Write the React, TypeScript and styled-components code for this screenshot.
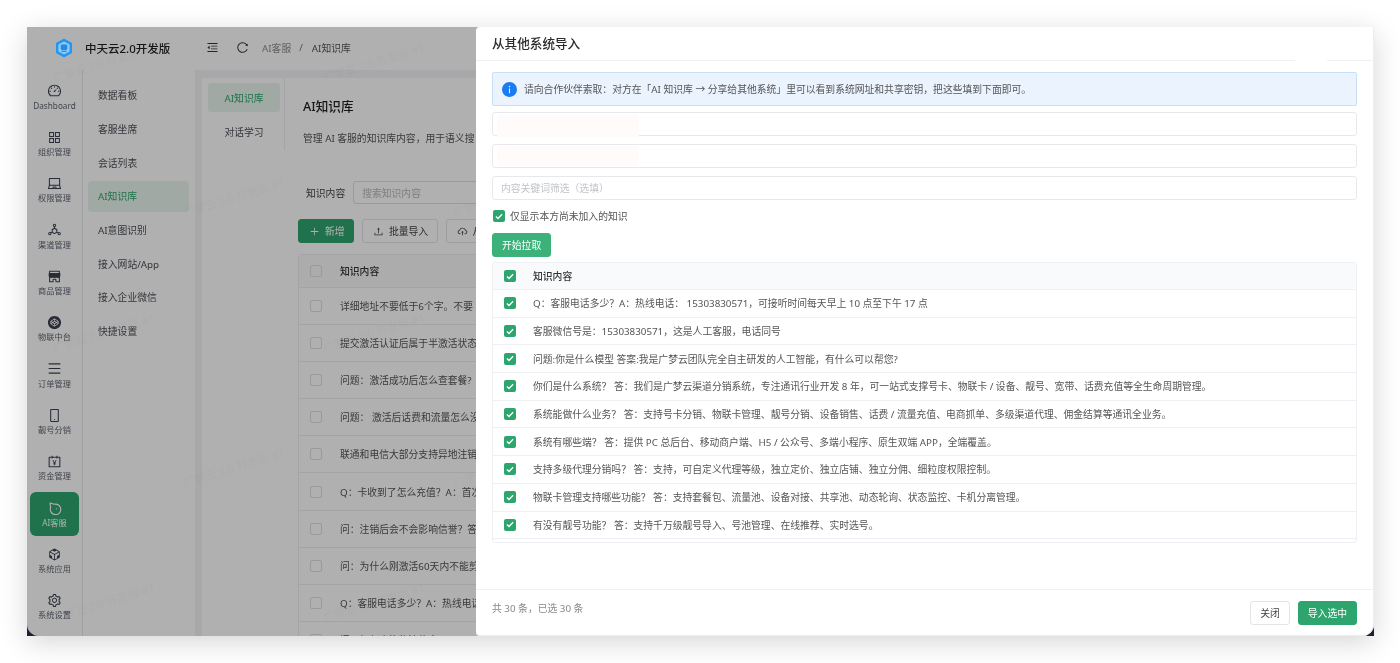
import type { ReactNode } from "react";
import styled, { createGlobalStyle } from "styled-components";
import {
  AiFillInfoCircle,
  AiFillShop,
  AiOutlineAccountBook,
  AiOutlineAppstore,
  AiOutlineCloudUpload,
  AiOutlineCodeSandbox,
  AiOutlineCodepenCircle,
  AiOutlineDashboard,
  AiOutlineDeploymentUnit,
  AiOutlineLaptop,
  AiOutlineMenu,
  AiOutlineMenuFold,
  AiOutlineMobile,
  AiOutlinePlus,
  AiOutlineReload,
  AiOutlineSetting,
  AiOutlineUpload,
} from "react-icons/ai";

const GREEN = "#2ea56e";

const GlobalStyle = createGlobalStyle`
  html, body {
    margin: 0;
    background: #fff;
    overflow: hidden;
    font-family: "Noto Sans", "Noto Sans CJK SC", sans-serif;
  }
  * { box-sizing: border-box; }
`;

const BotIcon = () => (
  <svg width="14" height="14" viewBox="0 0 24 24" fill="none" stroke="currentColor" strokeWidth="1.9">
    <path d="M3.5 3.5 L11 5.6 A9 9 0 1 1 4.4 11.5 Z" strokeLinejoin="round" />
    <circle cx="14.5" cy="13.5" r="1" fill="currentColor" stroke="none" />
  </svg>
);

const Logo = () => (
  <svg width="18" height="20" viewBox="0 0 18 20">
    <path d="M9 0.5 L17 5 V15 L9 19.5 L1 15 V5 Z" fill="#2196f3" />
    <path d="M9 3.4 L14.6 6.6 V13.4 L9 16.6 L3.4 13.4 V6.6 Z" fill="#8ccdf7" />
    <rect x="5.8" y="6.4" width="6.4" height="5.6" rx="1" fill="#2a86e0" />
    <path d="M6.5 13.4 H11.5" stroke="#2a86e0" strokeWidth="1.3" />
  </svg>
);

const Check = () => (
  <svg width="8" height="7" viewBox="0 0 8 7" fill="none">
    <path d="M0.9 3.6 L3 5.5 L7.1 1.2" stroke="#fff" strokeWidth="1.3" />
  </svg>
);

const railItems: { label: string; icon: ReactNode; active?: boolean }[] = [
  { label: "Dashboard", icon: <AiOutlineDashboard /> },
  { label: "组织管理", icon: <AiOutlineAppstore /> },
  { label: "权限管理", icon: <AiOutlineLaptop /> },
  { label: "渠道管理", icon: <AiOutlineDeploymentUnit /> },
  { label: "商品管理", icon: <AiFillShop /> },
  { label: "物联中台", icon: <AiOutlineCodepenCircle /> },
  { label: "订单管理", icon: <AiOutlineMenu /> },
  { label: "靓号分销", icon: <AiOutlineMobile /> },
  { label: "资金管理", icon: <AiOutlineAccountBook /> },
  { label: "AI客服", icon: <BotIcon />, active: true },
  { label: "系统应用", icon: <AiOutlineCodeSandbox /> },
  { label: "系统设置", icon: <AiOutlineSetting /> },
];

const subItems = ["数据看板", "客服坐席", "会话列表", "AI知识库", "AI意图识别", "接入网站/App", "接入企业微信", "快捷设置"];

// the drawer hides the rest of these lines, only the visible part is kept
const backRows = [
  "详细地址不要低于6个字。不要",
  "提交激活认证后属于半激活状态",
  "问题：激活成功后怎么查套餐?",
  "问题： 激活后话费和流量怎么没",
  "联通和电信大部分支持异地注销",
  "Q：卡收到了怎么充值？A：首次",
  "问：注销后会不会影响信誉？答",
  "问：为什么刚激活60天内不能剪",
  "Q：客服电话多少？A：热线电话",
  "问：如何查询物流信息",
];

const importRows = [
  "Q：客服电话多少？A：热线电话： 15303830571，可接听时间每天早上 10 点至下午 17 点",
  "客服微信号是：15303830571，这是人工客服，电话同号",
  "问题:你是什么模型 答案:我是广梦云团队完全自主研发的人工智能，有什么可以帮您?",
  "你们是什么系统？ 答：我们是广梦云渠道分销系统，专注通讯行业开发 8 年，可一站式支撑号卡、物联卡 / 设备、靓号、宽带、话费充值等全生命周期管理。",
  "系统能做什么业务？ 答：支持号卡分销、物联卡管理、靓号分销、设备销售、话费 / 流量充值、电商抓单、多级渠道代理、佣金结算等通讯全业务。",
  "系统有哪些端？ 答：提供 PC 总后台、移动商户端、H5 / 公众号、多端小程序、原生双端 APP，全端覆盖。",
  "支持多级代理分销吗？ 答：支持，可自定义代理等级，独立定价、独立店铺、独立分佣、细粒度权限控制。",
  "物联卡管理支持哪些功能？ 答：支持套餐包、流量池、设备对接、共享池、动态轮询、状态监控、卡机分离管理。",
  "有没有靓号功能？ 答：支持千万级靓号导入、号池管理、在线推荐、实时选号。",
];

const App = () => {
  return (
    <>
      <GlobalStyle />
      <Page>
        <Frame>
          <Shell>
            <Side>
              <Brand>
                <LogoWrap>
                  <Logo />
                </LogoWrap>
                <BrandName>中天云2.0开发版</BrandName>
              </Brand>
              <SideBody>
                <Rail>
                  {railItems.map((item) => (
                    <RailItem key={item.label} $active={item.active}>
                      <RailIcon $active={item.active}>{item.icon}</RailIcon>
                      <span>{item.label}</span>
                    </RailItem>
                  ))}
                </Rail>
                <SubMenu>
                  {subItems.map((item) => (
                    <SubItem key={item} $active={item === "AI知识库"}>
                      {item}
                    </SubItem>
                  ))}
                </SubMenu>
              </SideBody>
            </Side>
            <Right>
              <TopBar>
                <TopIcon>
                  <AiOutlineMenuFold />
                </TopIcon>
                <TopIcon>
                  <AiOutlineReload />
                </TopIcon>
                <Crumbs>
                  <span>AI客服</span>
                  <CrumbSep>/</CrumbSep>
                  <CrumbNow>AI知识库</CrumbNow>
                </Crumbs>
              </TopBar>
              <Content>
                <Panel>
                  <Tabs>
                    <TabItem $active>AI知识库</TabItem>
                    <TabItem>对话学习</TabItem>
                  </Tabs>
                  <Main>
                    <Heading>AI知识库</Heading>
                    <Desc>管理 AI 客服的知识库内容，用于语义搜</Desc>
                    <Filter>
                      <FilterLabel>知识内容</FilterLabel>
                      <FilterInput>搜索知识内容</FilterInput>
                    </Filter>
                    <Actions>
                      <Button $kind="primary" $icon>
                        <AiOutlinePlus />
                        新增
                      </Button>
                      <Button $icon>
                        <AiOutlineUpload />
                        批量导入
                      </Button>
                      <Button $icon>
                        <AiOutlineCloudUpload />从
                      </Button>
                    </Actions>
                    <BackTable>
                      <BackHead>
                        <BackBox />
                        知识内容
                      </BackHead>
                      {backRows.map((row) => (
                        <BackRow key={row}>
                          <BackBox />
                          {row}
                        </BackRow>
                      ))}
                    </BackTable>
                  </Main>
                </Panel>
              </Content>
            </Right>
          </Shell>
          <Mask>
            <WatermarkSvg>
              <defs>
                <pattern id="wm" width="270" height="270" patternUnits="userSpaceOnUse">
                  <text x="158" y="190" transform="rotate(-17 158 190)">广梦云 2.0 开发版 #1</text>
                  <text x="28" y="55" transform="rotate(-17 28 55)">广梦云 2.0 开发版 #1</text>
                </pattern>
              </defs>
              <rect width="100%" height="100%" fill="url(#wm)" />
            </WatermarkSvg>
          </Mask>
          <Drawer>
            <DrawerHead>
              从其他系统导入
              <LinePatch />
            </DrawerHead>
            <DrawerBody>
              <Notice>
                <NoticeIcon>
                  <AiFillInfoCircle />
                </NoticeIcon>
                请向合作伙伴索取：对方在「AI 知识库 → 分享给其他系统」里可以看到系统网址和共享密钥，把这些填到下面即可。
              </Notice>
              <Field>
                <Redaction $first />
              </Field>
              <Field>
                <Redaction />
              </Field>
              <Field>内容关键词筛选（选填）</Field>
              <CheckLine>
                <Box>
                  <Check />
                </Box>
                仅显示本方尚未加入的知识
              </CheckLine>
              <Button $kind="soft">开始拉取</Button>
              <ImportTable>
                <ImportHead>
                  <Box>
                    <Check />
                  </Box>
                  知识内容
                </ImportHead>
                {importRows.map((row) => (
                  <ImportRow key={row}>
                    <Box>
                      <Check />
                    </Box>
                    <RowText>{row}</RowText>
                  </ImportRow>
                ))}
              </ImportTable>
            </DrawerBody>
            <DrawerFoot>
              <Count>共 30 条，已选 30 条</Count>
              <FootButtons>
                <Button>关闭</Button>
                <Button $kind="primary">导入选中</Button>
              </FootButtons>
            </DrawerFoot>
          </Drawer>
        </Frame>
      </Page>
    </>
  );
};

const Page = styled.div`
  width: 1400px;
  height: 663px;
  padding: 27px 26px 27px 27px;
  filter: blur(0.3px);
`;

const Frame = styled.div`
  position: relative;
  height: 609px;
  background: #1b2130;
  box-shadow: 0 6px 26px rgba(0, 0, 0, 0.17);
`;

const Shell = styled.div`
  display: flex;
  height: 100%;
  background: #fff;
  border-radius: 0 0 12px 12px;
  overflow: hidden;
`;

const Side = styled.div`
  width: 168px;
  flex: none;
  display: flex;
  flex-direction: column;
`;

const Brand = styled.div`
  height: 43px;
  display: flex;
  align-items: center;
  padding: 0 0 2px 28px;
  gap: 12px;
`;

/* the logo keeps its full colour in the screenshot, so it sits above the mask */
const LogoWrap = styled.div`
  position: relative;
  z-index: 1;
  display: flex;
`;

const BrandName = styled.div`
  font-size: 11.5px;
  font-weight: 500;
  color: #222;
  white-space: nowrap;
`;

const SideBody = styled.div`
  flex: 1;
  display: flex;
  min-height: 0;
`;

const Rail = styled.div`
  width: 56px;
  flex: none;
  border-right: 1px solid #e6e8eb;
  padding: 5.3px 0 0 3px;
  display: flex;
  flex-direction: column;
  gap: 2.33px;
`;

const RailItem = styled.div<{ $active?: boolean }>`
  width: 49px;
  height: 44px;
  flex: none;
  border-radius: 6px;
  display: flex;
  flex-direction: column;
  align-items: center;
  padding-top: 8px;
  font-size: 8.2px;
  line-height: 12px;
  white-space: nowrap;
  color: ${(p) => (p.$active ? "#fff" : "#5d6470")};
  background: ${(p) => (p.$active ? GREEN : "transparent")};
`;

const RailIcon = styled.div<{ $active?: boolean }>`
  height: 15px;
  margin-bottom: 1.4px;
  font-size: 15px;
  line-height: 15px;
  color: ${(p) => (p.$active ? "#fff" : "#3a4150")};
  display: flex;
  align-items: center;
`;

const SubMenu = styled.div`
  flex: 1;
  padding: 9.7px 6px 0 5px;
  display: flex;
  flex-direction: column;
  gap: 2.7px;
`;

const SubItem = styled.div<{ $active?: boolean }>`
  height: 31px;
  flex: none;
  border-radius: 4px;
  padding-left: 10px;
  display: flex;
  align-items: center;
  font-size: 9.8px;
  color: ${(p) => (p.$active ? GREEN : "#4b4f56")};
  background: ${(p) => (p.$active ? "#e8f5ee" : "transparent")};
`;

const Right = styled.div`
  flex: 1;
  min-width: 0;
  display: flex;
  flex-direction: column;
`;

const TopBar = styled.div`
  height: 43px;
  flex: none;
  display: flex;
  align-items: center;
  padding: 0 0 2px 11px;
  gap: 17px;
`;

const TopIcon = styled.div`
  font-size: 13px;
  display: flex;
  color: #333;
`;

const Crumbs = styled.div`
  display: flex;
  gap: 8px;
  font-size: 9.8px;
  color: #8a8d93;
  margin-left: -4px;
`;

const CrumbSep = styled.span`
  color: #777;
  margin-right: 1px;
`;

const CrumbNow = styled.span`
  color: #555;
`;

const Content = styled.div`
  flex: 1;
  min-height: 0;
  background: #f3f4f6;
  padding: 8px 0 0 7px;
  display: flex;
`;

const Panel = styled.div`
  flex: 1;
  min-width: 0;
  background: #fff;
  display: flex;
`;

const Tabs = styled.div`
  width: 83px;
  height: 72px;
  flex: none;
  border-right: 1px solid #eceef0;
  padding: 5px 4px 0 6px;
  display: flex;
  flex-direction: column;
  gap: 5px;
`;

const TabItem = styled.div<{ $active?: boolean }>`
  height: 29px;
  flex: none;
  border-radius: 3px;
  display: flex;
  align-items: center;
  justify-content: center;
  font-size: 9.8px;
  color: ${(p) => (p.$active ? GREEN : "#4b4f56")};
  background: ${(p) => (p.$active ? "#e8f5ee" : "transparent")};
`;

const Main = styled.div`
  flex: 1;
  min-width: 0;
  padding: 20px 0 0 13px;
  overflow: hidden;
`;

const Heading = styled.div`
  margin-left: 5px;
  font-size: 12.6px;
  line-height: 18px;
  font-weight: 500;
  color: #222;
`;

const Desc = styled.div`
  margin: 15px 0 0 5px;
  font-size: 9.8px;
  line-height: 16px;
  color: #555;
  white-space: nowrap;
`;

const Filter = styled.div`
  margin: 34px 0 0 8px;
  display: flex;
  align-items: center;
  gap: 8px;
`;

const FilterLabel = styled.div`
  font-size: 9.8px;
  color: #444;
`;

const FilterInput = styled.div`
  width: 260px;
  height: 23px;
  border: 1px solid #dcdfe3;
  border-radius: 3px;
  padding-left: 8px;
  display: flex;
  align-items: center;
  font-size: 9.8px;
  color: #b5b8bd;
`;

const Actions = styled.div`
  margin-top: 15px;
  display: flex;
  gap: 8px;
`;

const Button = styled.div<{ $kind?: "primary" | "soft"; $icon?: boolean }>`
  height: 24px;
  width: fit-content;
  flex: none;
  padding: 0 ${(p) => (p.$icon ? "8.4px" : "9px")} 0 ${(p) => (p.$icon ? "10px" : "9px")};
  border-radius: 3px;
  display: flex;
  align-items: center;
  gap: 5px;
  font-size: 9.8px;
  white-space: nowrap;
  border: 1px solid
    ${(p) => (p.$kind === "primary" ? GREEN : p.$kind === "soft" ? "#3cb27a" : "#e2e4e8")};
  background: ${(p) => (p.$kind === "primary" ? GREEN : p.$kind === "soft" ? "#3cb27a" : "#fff")};
  color: ${(p) => (p.$kind ? "#fff" : "#444")};
  svg {
    font-size: 11px;
  }
`;

const BackTable = styled.div`
  margin-top: 11px;
  width: 900px;
  border: 1px solid #eceef1;
  border-radius: 3px 0 0 0;
`;

const BackHead = styled.div`
  height: 33px;
  display: flex;
  align-items: center;
  gap: 18px;
  padding-left: 11px;
  font-size: 9.8px;
  font-weight: 500;
  color: #333;
  background: #f9fafb;
  border-bottom: 1px solid #eceef1;
`;

const BackRow = styled.div`
  height: 37.1px;
  display: flex;
  align-items: center;
  gap: 18px;
  padding-left: 11px;
  font-size: 9.8px;
  color: #555;
  white-space: nowrap;
  border-bottom: 1px solid #eceef1;
`;

const BackBox = styled.div`
  width: 12px;
  height: 12px;
  flex: none;
  border: 1px solid #dcdfe3;
  border-radius: 2px;
`;

const Mask = styled.div`
  position: absolute;
  inset: 0;
  border-radius: 0 0 12px 12px;
  background: rgba(0, 0, 0, 0.31);
  overflow: hidden;
`;

const WatermarkSvg = styled.svg`
  width: 100%;
  height: 100%;
  display: block;
  text {
    font-size: 11.2px;
    fill: rgba(0, 0, 0, 0.025);
    font-family: "Noto Sans", "Noto Sans CJK SC", sans-serif;
  }
`;

const Drawer = styled.div`
  position: absolute;
  top: 0;
  right: 0;
  bottom: 0;
  width: 898px;
  background: #fff;
  border-right: 1px solid #eee;
  border-bottom: 1px solid #eee;
  border-radius: 4px 0 12px 4px;
  display: flex;
  flex-direction: column;
`;

const DrawerHead = styled.div`
  position: relative;
  height: 34px;
  flex: none;
  padding: 0 16px 3px;
  display: flex;
  align-items: center;
  font-size: 12.6px;
  font-weight: 500;
  color: #2b2b2b;
  border-bottom: 1px solid #f0f1f3;
`;

const LinePatch = styled.div`
  position: absolute;
  left: 819px;
  bottom: -1px;
  width: 32px;
  height: 1px;
  background: #fff;
`;

const DrawerBody = styled.div`
  flex: 1;
  min-height: 0;
  padding: 11px 16px 0;
  display: flex;
  flex-direction: column;
`;

const Notice = styled.div`
  height: 34px;
  flex: none;
  border: 1px solid #c8dffa;
  border-radius: 2px;
  background: #ebf3fe;
  padding-left: 8px;
  display: flex;
  align-items: center;
  gap: 6px;
  font-size: 9.8px;
  color: #555;
`;

const NoticeIcon = styled.div`
  font-size: 17px;
  display: flex;
  color: #1a7cf2;
`;

const Field = styled.div`
  position: relative;
  height: 24px;
  flex: none;
  margin-top: 8px;
  border: 1px solid #e6e8ec;
  border-radius: 3px;
  padding-left: 8px;
  display: flex;
  align-items: center;
  font-size: 9.8px;
  color: #c0c3c8;
  &:nth-child(2) {
    margin-top: 6px;
  }
`;

const Redaction = styled.div<{ $first?: boolean }>`
  position: absolute;
  left: 4px;
  top: ${(p) => (p.$first ? "2px" : "1px")};
  width: 142px;
  height: ${(p) => (p.$first ? "22px" : "20px")};
  background: #fffbfa;
`;

const CheckLine = styled.div`
  margin: 10px 0 11px 1px;
  height: 12px;
  flex: none;
  display: flex;
  align-items: center;
  gap: 5px;
  font-size: 9.8px;
  color: #555;
`;

const Box = styled.div`
  width: 12px;
  height: 12px;
  flex: none;
  border-radius: 2px;
  background: ${GREEN};
  display: flex;
  align-items: center;
  justify-content: center;
`;

const ImportTable = styled.div`
  margin-top: 5px;
  height: 281px;
  flex: none;
  border: 1px solid #eff0f3;
  border-radius: 3px;
  overflow: hidden;
`;

const ImportHead = styled.div`
  height: 27px;
  display: flex;
  align-items: center;
  gap: 17px;
  padding-left: 11px;
  background: #f9fafb;
  border-bottom: 1px solid #eff0f3;
  font-size: 9.8px;
  font-weight: 500;
  color: #333;
`;

const ImportRow = styled.div`
  height: 27.7px;
  display: flex;
  align-items: center;
  gap: 17px;
  padding-left: 11px;
  border-bottom: 1px solid #eff0f3;
`;

const RowText = styled.div`
  font-size: 9.8px;
  color: #555;
  white-space: nowrap;
`;

const DrawerFoot = styled.div`
  height: 46px;
  flex: none;
  padding: 0 16px;
  border-top: 1px solid #f0f1f3;
  display: flex;
  align-items: center;
  justify-content: space-between;
`;

const Count = styled.div`
  font-size: 9.8px;
  color: #888;
  margin-bottom: 9px;
`;

const FootButtons = styled.div`
  display: flex;
  gap: 8px;
`;

export default App;
